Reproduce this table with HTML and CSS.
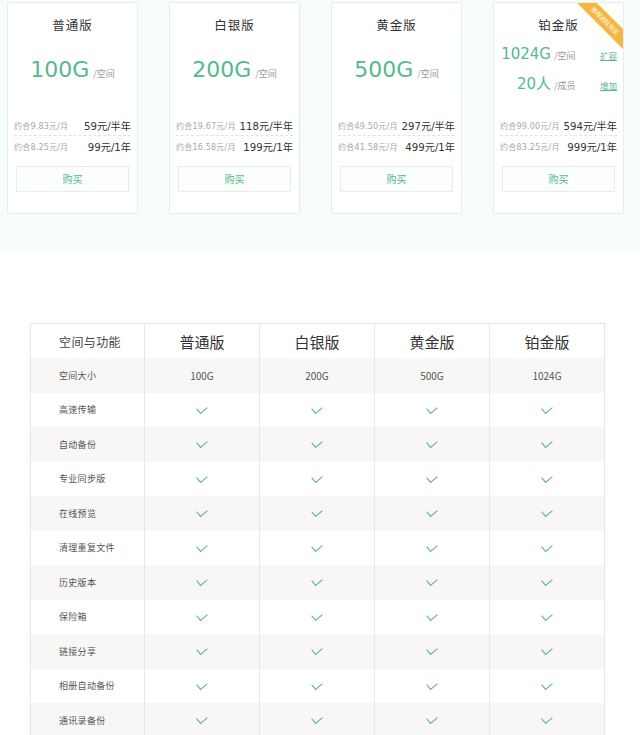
FILE: index.html
```html
<!DOCTYPE html>
<html lang="zh">
<head>
<meta charset="utf-8">
<title>套餐对比</title>
<link rel="stylesheet" href="styles.css">
</head>
<body>
<section class="plans">
  <div class="card">
    <div class="title">普通版</div>
    <div class="big"><span class="num">100G</span><span class="unit">/空间</span></div>
    <div class="prices">
      <div class="row"><span class="per">约合9.83元/月</span><span class="amt">59元/半年</span></div>
      <div class="row"><span class="per">约合8.25元/月</span><span class="amt">99元/1年</span></div>
    </div>
    <div class="buy">购买</div>
  </div>
  <div class="card">
    <div class="title">白银版</div>
    <div class="big"><span class="num">200G</span><span class="unit">/空间</span></div>
    <div class="prices">
      <div class="row"><span class="per">约合19.67元/月</span><span class="amt">118元/半年</span></div>
      <div class="row"><span class="per">约合16.58元/月</span><span class="amt">199元/1年</span></div>
    </div>
    <div class="buy">购买</div>
  </div>
  <div class="card">
    <div class="title">黄金版</div>
    <div class="big"><span class="num">500G</span><span class="unit">/空间</span></div>
    <div class="prices">
      <div class="row"><span class="per">约合49.50元/月</span><span class="amt">297元/半年</span></div>
      <div class="row"><span class="per">约合41.58元/月</span><span class="amt">499元/1年</span></div>
    </div>
    <div class="buy">购买</div>
  </div>
  <div class="card">
    <div class="ribbon">推荐团队购买</div>
    <div class="title">铂金版</div>
    <div class="opts">
      <div class="opt"><span class="n">1024G</span><span class="unit">/空间</span><a class="link">扩容</a></div>
      <div class="opt"><span class="n">20人</span><span class="unit">/成员</span><a class="link">增加</a></div>
    </div>
    <div class="prices">
      <div class="row"><span class="per">约合99.00元/月</span><span class="amt">594元/半年</span></div>
      <div class="row"><span class="per">约合83.25元/月</span><span class="amt">999元/1年</span></div>
    </div>
    <div class="buy">购买</div>
  </div>
</section>

<table class="cmp">
  <colgroup><col class="c1"><col><col><col><col></colgroup>
  <thead>
    <tr><th class="feat">空间与功能</th><th>普通版</th><th>白银版</th><th>黄金版</th><th>铂金版</th></tr>
  </thead>
  <tbody>
    <tr><td class="feat">空间大小</td><td class="val">100G</td><td class="val">200G</td><td class="val">500G</td><td class="val">1024G</td></tr>
    <tr><td class="feat">高速传输</td><td><svg class="ck" viewBox="0 0 12 8"><path d="M0.6 1.6 L4.6 6.4 L11.4 0.6"/></svg></td><td><svg class="ck" viewBox="0 0 12 8"><path d="M0.6 1.6 L4.6 6.4 L11.4 0.6"/></svg></td><td><svg class="ck" viewBox="0 0 12 8"><path d="M0.6 1.6 L4.6 6.4 L11.4 0.6"/></svg></td><td><svg class="ck" viewBox="0 0 12 8"><path d="M0.6 1.6 L4.6 6.4 L11.4 0.6"/></svg></td></tr>
    <tr><td class="feat">自动备份</td><td><svg class="ck" viewBox="0 0 12 8"><path d="M0.6 1.6 L4.6 6.4 L11.4 0.6"/></svg></td><td><svg class="ck" viewBox="0 0 12 8"><path d="M0.6 1.6 L4.6 6.4 L11.4 0.6"/></svg></td><td><svg class="ck" viewBox="0 0 12 8"><path d="M0.6 1.6 L4.6 6.4 L11.4 0.6"/></svg></td><td><svg class="ck" viewBox="0 0 12 8"><path d="M0.6 1.6 L4.6 6.4 L11.4 0.6"/></svg></td></tr>
    <tr><td class="feat">专业同步版</td><td><svg class="ck" viewBox="0 0 12 8"><path d="M0.6 1.6 L4.6 6.4 L11.4 0.6"/></svg></td><td><svg class="ck" viewBox="0 0 12 8"><path d="M0.6 1.6 L4.6 6.4 L11.4 0.6"/></svg></td><td><svg class="ck" viewBox="0 0 12 8"><path d="M0.6 1.6 L4.6 6.4 L11.4 0.6"/></svg></td><td><svg class="ck" viewBox="0 0 12 8"><path d="M0.6 1.6 L4.6 6.4 L11.4 0.6"/></svg></td></tr>
    <tr><td class="feat">在线预览</td><td><svg class="ck" viewBox="0 0 12 8"><path d="M0.6 1.6 L4.6 6.4 L11.4 0.6"/></svg></td><td><svg class="ck" viewBox="0 0 12 8"><path d="M0.6 1.6 L4.6 6.4 L11.4 0.6"/></svg></td><td><svg class="ck" viewBox="0 0 12 8"><path d="M0.6 1.6 L4.6 6.4 L11.4 0.6"/></svg></td><td><svg class="ck" viewBox="0 0 12 8"><path d="M0.6 1.6 L4.6 6.4 L11.4 0.6"/></svg></td></tr>
    <tr><td class="feat">清理重复文件</td><td><svg class="ck" viewBox="0 0 12 8"><path d="M0.6 1.6 L4.6 6.4 L11.4 0.6"/></svg></td><td><svg class="ck" viewBox="0 0 12 8"><path d="M0.6 1.6 L4.6 6.4 L11.4 0.6"/></svg></td><td><svg class="ck" viewBox="0 0 12 8"><path d="M0.6 1.6 L4.6 6.4 L11.4 0.6"/></svg></td><td><svg class="ck" viewBox="0 0 12 8"><path d="M0.6 1.6 L4.6 6.4 L11.4 0.6"/></svg></td></tr>
    <tr><td class="feat">历史版本</td><td><svg class="ck" viewBox="0 0 12 8"><path d="M0.6 1.6 L4.6 6.4 L11.4 0.6"/></svg></td><td><svg class="ck" viewBox="0 0 12 8"><path d="M0.6 1.6 L4.6 6.4 L11.4 0.6"/></svg></td><td><svg class="ck" viewBox="0 0 12 8"><path d="M0.6 1.6 L4.6 6.4 L11.4 0.6"/></svg></td><td><svg class="ck" viewBox="0 0 12 8"><path d="M0.6 1.6 L4.6 6.4 L11.4 0.6"/></svg></td></tr>
    <tr><td class="feat">保险箱</td><td><svg class="ck" viewBox="0 0 12 8"><path d="M0.6 1.6 L4.6 6.4 L11.4 0.6"/></svg></td><td><svg class="ck" viewBox="0 0 12 8"><path d="M0.6 1.6 L4.6 6.4 L11.4 0.6"/></svg></td><td><svg class="ck" viewBox="0 0 12 8"><path d="M0.6 1.6 L4.6 6.4 L11.4 0.6"/></svg></td><td><svg class="ck" viewBox="0 0 12 8"><path d="M0.6 1.6 L4.6 6.4 L11.4 0.6"/></svg></td></tr>
    <tr><td class="feat">链接分享</td><td><svg class="ck" viewBox="0 0 12 8"><path d="M0.6 1.6 L4.6 6.4 L11.4 0.6"/></svg></td><td><svg class="ck" viewBox="0 0 12 8"><path d="M0.6 1.6 L4.6 6.4 L11.4 0.6"/></svg></td><td><svg class="ck" viewBox="0 0 12 8"><path d="M0.6 1.6 L4.6 6.4 L11.4 0.6"/></svg></td><td><svg class="ck" viewBox="0 0 12 8"><path d="M0.6 1.6 L4.6 6.4 L11.4 0.6"/></svg></td></tr>
    <tr><td class="feat">相册自动备份</td><td><svg class="ck" viewBox="0 0 12 8"><path d="M0.6 1.6 L4.6 6.4 L11.4 0.6"/></svg></td><td><svg class="ck" viewBox="0 0 12 8"><path d="M0.6 1.6 L4.6 6.4 L11.4 0.6"/></svg></td><td><svg class="ck" viewBox="0 0 12 8"><path d="M0.6 1.6 L4.6 6.4 L11.4 0.6"/></svg></td><td><svg class="ck" viewBox="0 0 12 8"><path d="M0.6 1.6 L4.6 6.4 L11.4 0.6"/></svg></td></tr>
    <tr><td class="feat">通讯录备份</td><td><svg class="ck" viewBox="0 0 12 8"><path d="M0.6 1.6 L4.6 6.4 L11.4 0.6"/></svg></td><td><svg class="ck" viewBox="0 0 12 8"><path d="M0.6 1.6 L4.6 6.4 L11.4 0.6"/></svg></td><td><svg class="ck" viewBox="0 0 12 8"><path d="M0.6 1.6 L4.6 6.4 L11.4 0.6"/></svg></td><td><svg class="ck" viewBox="0 0 12 8"><path d="M0.6 1.6 L4.6 6.4 L11.4 0.6"/></svg></td></tr>
  </tbody>
</table>
</body>
</html>
```

FILE: styles.css
```css
html, body {
  margin: 0;
  padding: 0;
  background: #ffffff;
  font-family: "Noto Sans CJK SC", "Noto Sans", sans-serif;
}

.plans {
  height: 250px;
  box-sizing: border-box;
  background: #f6fdfb;
  padding: 2px 0 0 7px;
  display: flex;
  gap: 31px;
  align-items: flex-start;
}

.card {
  position: relative;
  overflow: hidden;
  width: 131px;
  height: 212px;
  box-sizing: border-box;
  border: 1px solid #e4eeea;
  border-radius: 2px;
  background: #ffffff;
  padding: 0 6px;
  font-family: "DejaVu Sans", "Noto Sans CJK SC", sans-serif;
}

.title {
  height: 44px;
  line-height: 44px;
  text-align: center;
  font-family: "Noto Sans CJK SC", sans-serif;
  font-size: 12.5px;
  letter-spacing: 1px;
  color: #333333;
}

.big {
  height: 46px;
  line-height: 46px;
  margin-bottom: 22px;
  display: flex;
  justify-content: center;
  align-items: baseline;
}

.num {
  font-size: 22px;
  color: #55b98d;
}

.unit {
  font-family: "Noto Sans CJK SC", sans-serif;
  font-size: 9px;
  color: #9a9a9a;
  margin-left: 4px;
}

.opts {
  margin-top: -8px;
  margin-bottom: 16px;
}

.opt {
  height: 30px;
  line-height: 30px;
  display: flex;
  align-items: baseline;
}

.opt .n {
  width: 51px;
  text-align: right;
  font-size: 15px;
  color: #55b98d;
}

.opt .unit {
  margin-left: 3px;
}

.link {
  margin-left: auto;
  font-family: "Noto Sans CJK SC", sans-serif;
  font-size: 8.5px;
  color: #55b98d;
  text-decoration: underline;
}

.row {
  height: 20px;
  display: flex;
  justify-content: space-between;
  align-items: center;
}

.row:first-child {
  border-bottom: 1px dashed #e2e2e2;
}

.per {
  font-size: 8px;
  letter-spacing: 0.2px;
  color: #a8a8a8;
}

.amt {
  font-size: 10.2px;
  color: #333333;
}

.buy {
  margin: 10px 2px 0;
  height: 26px;
  box-sizing: border-box;
  border: 1px solid #e6eeeb;
  background: #fbfefd;
  text-align: center;
  line-height: 24px;
  font-family: "Noto Sans CJK SC", sans-serif;
  font-size: 10px;
  color: #55b98d;
}

.ribbon {
  position: absolute;
  top: 11px;
  right: -23px;
  width: 82px;
  height: 14px;
  line-height: 14px;
  background: #f5b73f;
  color: #ffffff;
  font-family: "Noto Sans CJK SC", sans-serif;
  font-size: 6px;
  text-align: center;
  transform: rotate(45deg);
}

/* comparison table */
.cmp {
  margin: 73px 0 0 30px;
  width: 575px;
  table-layout: fixed;
  border-collapse: collapse;
  border: 1px solid #e6e6e6;
  border-bottom: none;
  box-shadow: 0 0 3px rgba(0, 0, 0, 0.04);
}

.cmp col.c1 {
  width: 114px;
}

.cmp th,
.cmp td {
  padding: 0;
  text-align: center;
  vertical-align: middle;
  border-left: 1px solid #e8e8e8;
}

.cmp th {
  height: 34px;
  font-weight: normal;
  font-size: 15px;
  color: #333333;
  background: #ffffff;
}

.cmp th.feat {
  font-size: 12px;
  letter-spacing: 0.4px;
  color: #444444;
}

.cmp .feat {
  text-align: left;
  padding-left: 28px;
}

.cmp td {
  height: 34.5px;
  font-size: 9px;
  letter-spacing: 0.3px;
  color: #555555;
}

.cmp td.val {
  font-size: 10px;
  letter-spacing: 0;
  color: #555555;
}

.cmp tbody tr:nth-child(odd) td {
  background: #f8f7f6;
}

.cmp tbody tr:nth-child(even) td {
  background: #ffffff;
}

.ck {
  display: block;
  margin: 2px auto 0;
  width: 12px;
  height: 8px;
  fill: none;
  stroke: #62b497;
  stroke-width: 1.1;
}
```
